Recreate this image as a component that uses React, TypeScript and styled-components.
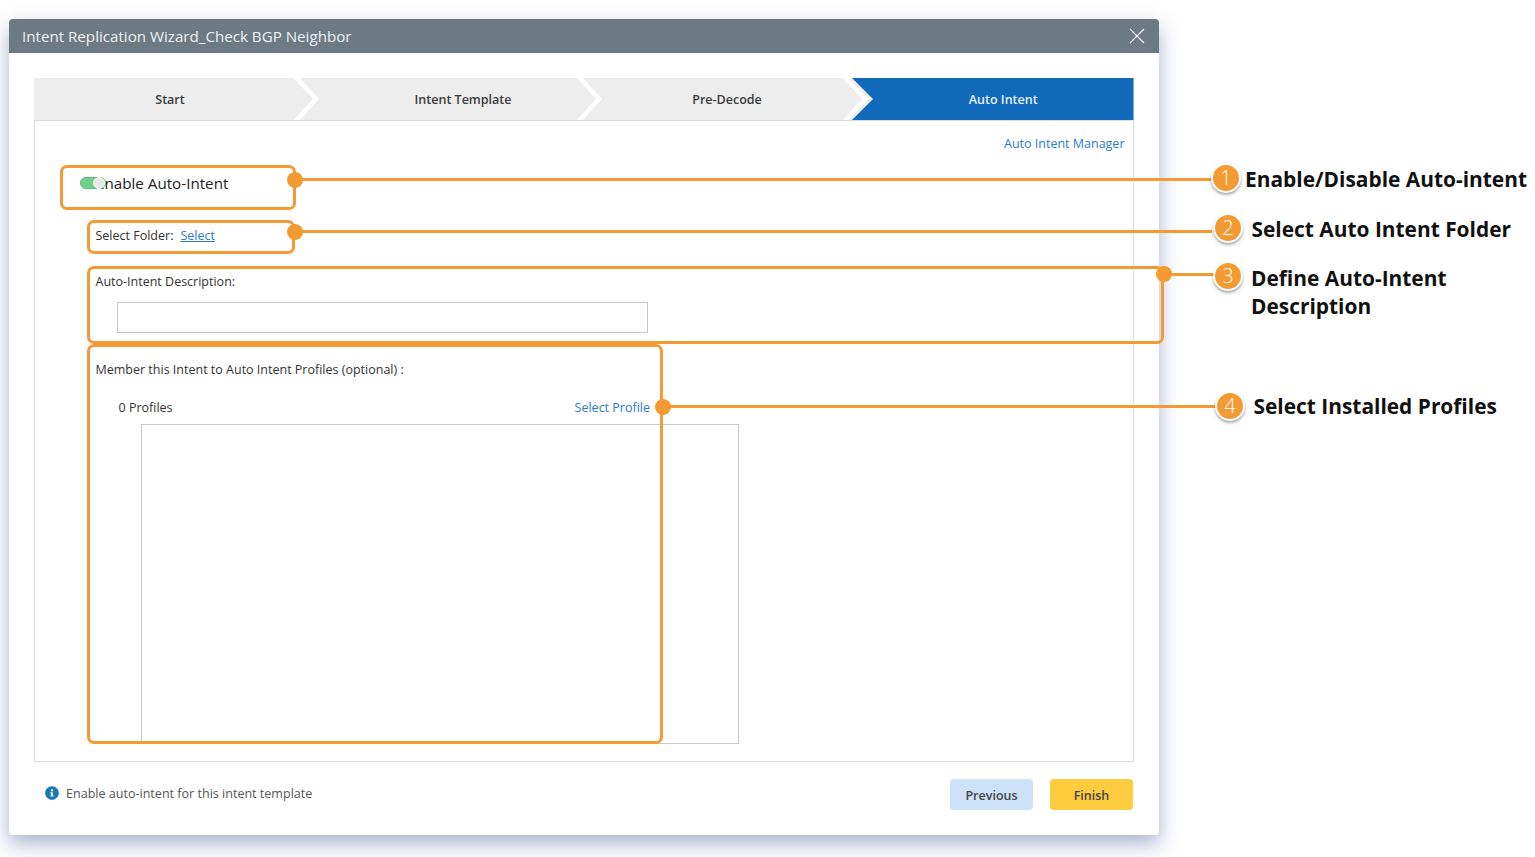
import React from "react";
import styled, { createGlobalStyle } from "styled-components";
import { FaInfoCircle } from "react-icons/fa";

const Global = createGlobalStyle`
  html, body { margin: 0; padding: 0; background: #fff; }
  body { font-family: "Open Sans", "Liberation Sans", sans-serif; overflow: hidden; }
`;
const Page = styled.div`
  position: relative;
  width: 1535px;
  height: 857px;
  padding: 19px 0 0 9px;
  box-sizing: border-box;
`;
const Modal = styled.div`
  width: 1150px;
  height: 816px;
  background: #fff;
  border-radius: 4px;
  box-shadow: 0 9px 20px rgba(100, 115, 170, 0.55);
  display: flex;
  flex-direction: column;
`;
const Header = styled.div`
  height: 34px;
  flex: none;
  box-sizing: border-box;
  background: #6c7a83;
  border-radius: 4px 4px 0 0;
  display: flex;
  align-items: center;
  justify-content: space-between;
  padding: 0 14px 1px 13px;
  color: #eef1f2;
  font-size: 15.15px;
`;
const Close = styled.svg`
  width: 16px;
  height: 16px;
  display: block;
  margin-top: 1px;
`;
const Body = styled.div`
  flex: 1;
  padding: 25px 25.5px 0 25px;
  display: flex;
  flex-direction: column;
`;
const Stepper = styled.div`
  display: flex;
  height: 42px;
  flex: none;
  background: #ededed;
`;
const Step = styled.div<{ $w: number; $pl?: number; $active?: boolean }>`
  position: relative;
  width: ${(p) => p.$w}px;
  padding-left: ${(p) => p.$pl ?? 0}px;
  box-sizing: border-box;
  display: flex;
  align-items: center;
  justify-content: center;
  font-size: 12.5px;
  font-weight: 600;
  color: ${(p) => (p.$active ? "#e4eef8" : "#3c3c3c")};
  background: ${(p) => (p.$active ? "#106ab9" : "transparent")};
  ${(p) => p.$active && "clip-path: polygon(18px 0, 100% 0, 100% 100%, 18px 100%, 39px 50%);"}
`;
const Chevron = styled.svg<{ $right: number }>`
  position: absolute;
  top: 0;
  right: ${(p) => p.$right}px;
  width: 28px;
  height: 42px;
`;
const Panel = styled.div`
  height: 642px;
  flex: none;
  box-sizing: border-box;
  border: 1px solid #dcdcdc;
  padding: 14px 8px 0 0;
  display: flex;
  flex-direction: column;
  font-size: 12.5px;
  color: #333;
`;
const ManagerRow = styled.div`
  display: flex;
  justify-content: flex-end;
  line-height: 18px;
`;
const LinkText = styled.span<{ $underline?: boolean }>`
  color: #2a7ccb;
  text-decoration: ${(p) => (p.$underline ? "underline" : "none")};
`;
const EnableRow = styled.div`
  display: flex;
  align-items: center;
  margin: 20px 0 0 45px;
  height: 20px;
  font-size: 15.2px;
  color: #222;
`;
const Toggle = styled.div`
  position: relative;
  width: 26px;
  height: 12px;
  margin-right: -10px;
  border-radius: 7px;
  background: #6fcf8b;
  border: 1px solid #5fb87c;
  box-sizing: border-box;
  z-index: 1;
`;
const Knob = styled.div`
  position: absolute;
  right: 0;
  top: -1px;
  width: 12px;
  height: 12px;
  border-radius: 50%;
  background: #e9e9e9;
  border: 1px solid #fff;
  box-sizing: border-box;
`;
const FolderRow = styled.div`
  display: flex;
  gap: 7px;
  margin: 34px 0 0 60.5px;
  line-height: 18px;
`;
const FieldLabel = styled.div<{ $top: number }>`
  margin: ${(p) => p.$top}px 0 0 60.5px;
  line-height: 18px;
`;
const DescInput = styled.div`
  width: 531px;
  height: 31px;
  box-sizing: border-box;
  border: 1px solid #c8c8c8;
  margin: 11px 0 0 81.5px;
`;
const ProfilesRow = styled.div`
  display: flex;
  justify-content: space-between;
  width: 531.5px;
  margin: 20px 0 0 83.5px;
  line-height: 18px;
`;
const ProfilesBox = styled.div`
  width: 598px;
  height: 320px;
  box-sizing: border-box;
  border: 1px solid #c8c8c8;
  margin: 7px 0 0 105.5px;
`;
const Footer = styled.div`
  display: flex;
  align-items: flex-start;
  justify-content: space-between;
  padding: 17px 0.5px 0 0;
`;
const Hint = styled.div`
  display: flex;
  align-items: center;
  gap: 7px;
  margin: 5.5px 0 0 11px;
  line-height: 18px;
  font-size: 12.55px;
  color: #555;
  svg { color: #1a78b4; width: 14px; height: 14px; margin-top: -1px; }
`;
const Buttons = styled.div`
  display: flex;
  gap: 17px;
`;
const Button = styled.div<{ $bg: string }>`
  width: 83px;
  height: 31px;
  box-sizing: border-box;
  padding-top: 1px;
  border-radius: 4px;
  background: ${(p) => p.$bg};
  display: flex;
  align-items: center;
  justify-content: center;
  font-size: 12.5px;
  font-weight: 600;
  color: #444;
`;
const Frame = styled.div<{ $x: number; $y: number; $w: number; $h: number }>`
  position: absolute;
  left: ${(p) => p.$x}px;
  top: ${(p) => p.$y}px;
  width: ${(p) => p.$w}px;
  height: ${(p) => p.$h}px;
  box-sizing: border-box;
  border: 3px solid #f39a33;
  border-radius: 7px;
`;
const Leader = styled.div<{ $x: number; $y: number; $w: number }>`
  position: absolute;
  left: ${(p) => p.$x}px;
  top: ${(p) => p.$y}px;
  width: ${(p) => p.$w}px;
  height: 3px;
  background: #f39a33;
`;
const Dot = styled.div<{ $x: number; $y: number }>`
  position: absolute;
  left: ${(p) => p.$x - 8}px;
  top: ${(p) => p.$y - 8}px;
  width: 16px;
  height: 16px;
  border-radius: 50%;
  background: #f39a33;
`;
const Badge = styled.div<{ $x: number; $y: number }>`
  position: absolute;
  left: ${(p) => p.$x - 15}px;
  top: ${(p) => p.$y - 15}px;
  width: 30px;
  height: 30px;
  box-sizing: border-box;
  border-radius: 50%;
  background: #f39a33;
  border: 2px solid #fff;
  box-shadow: 0 2px 3px rgba(0, 0, 0, 0.35);
  color: #fff;
  font-size: 20px;
  font-weight: 300;
  line-height: 26px;
  text-align: center;
`;
const Callout = styled.div<{ $x: number; $y: number }>`
  position: absolute;
  left: ${(p) => p.$x}px;
  top: ${(p) => p.$y}px;
  font-size: 20.9px;
  font-weight: 700;
  line-height: 28px;
  color: #111;
  white-space: nowrap;
`;

const ChevronMark = ({ right }: { right: number }) => (
  <Chevron $right={right} viewBox="0 0 28 42">
    <polyline points="2,-2 23,21 2,44" fill="none" stroke="#fff" strokeWidth="4.5" />
  </Chevron>
);

export default function App() {
  return (
    <Page>
      <Global />
      <Modal>
        <Header>
          <span>Intent Replication Wizard_Check BGP Neighbor</span>
          <Close viewBox="0 0 16 16">
            <path d="M1 1 L15 15 M15 1 L1 15" stroke="#f2f4f5" strokeWidth="1.2" fill="none" />
          </Close>
        </Header>
        <Body>
          <Stepper>
            <Step $w={272}>
              Start
              <ChevronMark right={-15} />
            </Step>
            <Step $w={314}>
              Intent Template
              <ChevronMark right={16} />
            </Step>
            <Step $w={214}>
              Pre-Decode
              <ChevronMark right={-36} />
            </Step>
            <Step $w={299.5} $pl={39} $active>
              Auto Intent
            </Step>
          </Stepper>
          <Panel>
            <ManagerRow>
              <LinkText>Auto Intent Manager</LinkText>
            </ManagerRow>
            <EnableRow>
              <Toggle>
                <Knob />
              </Toggle>
              <span>Enable Auto-Intent</span>
            </EnableRow>
            <FolderRow>
              <span>Select Folder:</span>
              <LinkText $underline>Select</LinkText>
            </FolderRow>
            <FieldLabel $top={28}>Auto-Intent Description:</FieldLabel>
            <DescInput />
            <FieldLabel $top={28}>Member this Intent to Auto Intent Profiles (optional) :</FieldLabel>
            <ProfilesRow>
              <span>0 Profiles</span>
              <LinkText>Select Profile</LinkText>
            </ProfilesRow>
            <ProfilesBox />
          </Panel>
          <Footer>
            <Hint>
              <FaInfoCircle />
              <span>Enable auto-intent for this intent template</span>
            </Hint>
            <Buttons>
              <Button $bg="#cbe2f9">Previous</Button>
              <Button $bg="#ffcb3f">Finish</Button>
            </Buttons>
          </Footer>
        </Body>
      </Modal>

      <Frame $x={59.5} $y={165} $w={236.5} $h={44.5} />
      <Frame $x={86.5} $y={219.5} $w={208} $h={34.5} />
      <Frame $x={86.5} $y={266} $w={1077} $h={78} />
      <Frame $x={86.5} $y={344} $w={576.5} $h={400} />
      <Leader $x={295} $y={178} $w={917} />
      <Leader $x={295} $y={230} $w={917} />
      <Leader $x={1164} $y={273} $w={50} />
      <Leader $x={663} $y={405} $w={553} />
      <Dot $x={295} $y={180} />
      <Dot $x={295} $y={232} />
      <Dot $x={1164} $y={274} />
      <Dot $x={663} $y={407} />
      <Badge $x={1226} $y={178}>1</Badge>
      <Badge $x={1228} $y={228}>2</Badge>
      <Badge $x={1228} $y={276}>3</Badge>
      <Badge $x={1230} $y={406}>4</Badge>
      <Callout $x={1245} $y={165}>Enable/Disable Auto-intent</Callout>
      <Callout $x={1251.5} $y={215}>Select Auto Intent Folder</Callout>
      <Callout $x={1251} $y={264}>Define Auto-Intent<br />Description</Callout>
      <Callout $x={1253.5} $y={392}>Select Installed Profiles</Callout>
    </Page>
  );
}
